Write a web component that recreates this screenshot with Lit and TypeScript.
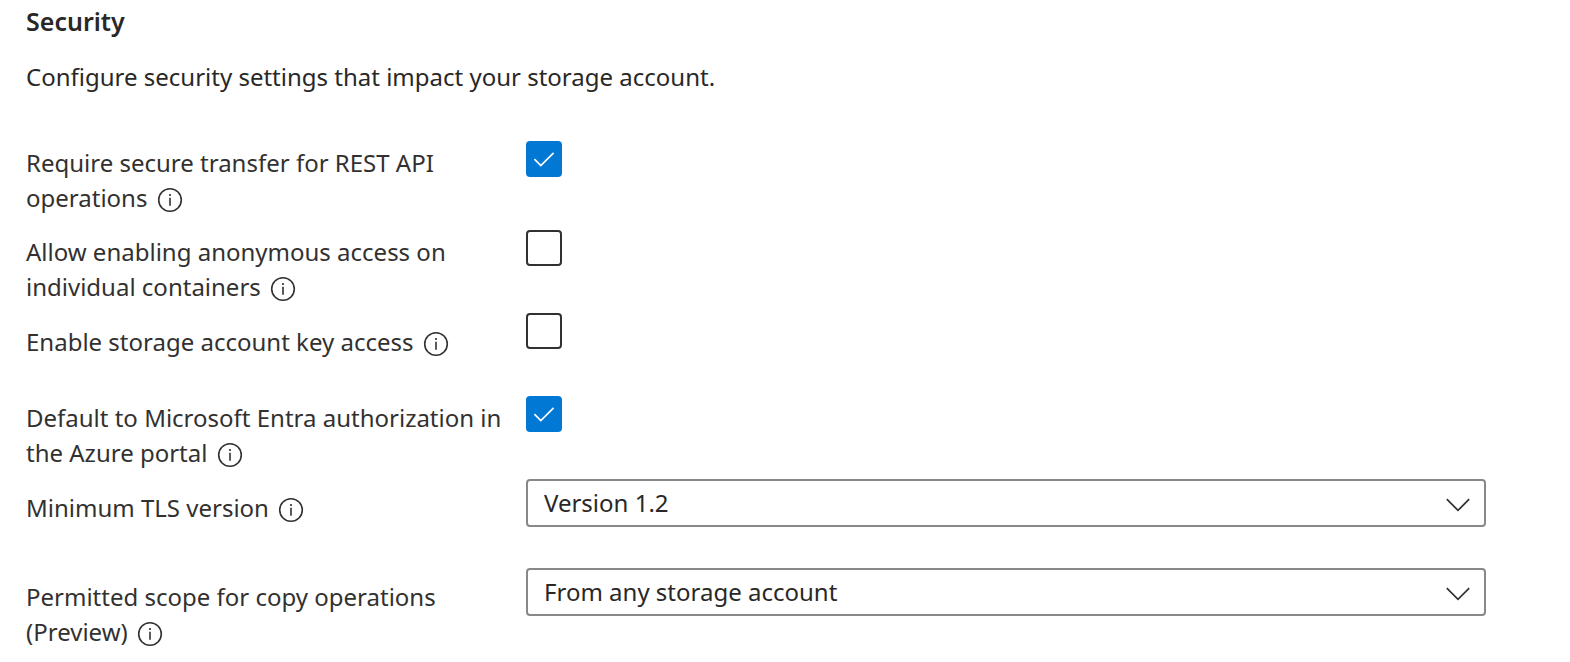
import { LitElement, html, css, nothing } from "lit";
import { customElement, property, state } from "lit/decorators.js";
import { classMap } from "lit/directives/class-map.js";

const base = css`
  :host {
    display: block;
    box-sizing: border-box;
    font-family: "Segoe UI", "Noto Sans", "Open Sans", sans-serif;
    font-size: 24px;
    line-height: 35px;
    color: #323130;
  }
  *,
  *::before,
  *::after {
    box-sizing: border-box;
  }
`;

@customElement("info-button")
class InfoButton extends LitElement {
  @property() about = "";

  static styles = css`
    :host {
      display: inline-block;
      margin-left: 3px;
      vertical-align: -6px;
      line-height: 0;
    }
    .info {
      display: block;
      width: 26px;
      height: 26px;
      padding: 0;
      border: 0;
      border-radius: 50%;
      background: transparent;
      color: #323130;
      cursor: pointer;
    }
    .icon {
      display: block;
    }
  `;

  render() {
    return html`
      <button class="info" type="button" aria-label="More information: ${this.about}">
        <svg class="icon" width="26" height="26" viewBox="0 0 26 26" aria-hidden="true">
          <circle cx="13" cy="13" r="11.3" fill="none" stroke="currentColor" stroke-width="1.6" />
          <circle cx="13" cy="8" r="1.1" fill="currentColor" />
          <path d="M13 10.8V18.8" stroke="currentColor" stroke-width="1.6" />
        </svg>
      </button>
    `;
  }
}

interface Setting {
  id: string;
  label: string;
  kind: "checkbox" | "select";
  checked?: boolean;
  options?: string[];
  single?: boolean;
}

@customElement("setting-row")
class SettingRow extends LitElement {
  @property({ attribute: false }) setting!: Setting;

  static styles = [
    base,
    css`
      .row {
        display: grid;
        grid-template-columns: 500px minmax(0, 1fr);
        align-items: start;
        min-height: 74px;
      }
      .caption {
        padding: 4px 12px 0 0;
      }
      .single {
        padding-top: 11px;
      }
      .check,
      .dropdown {
        display: grid;
        align-items: center;
      }
      .check {
        width: 36px;
        height: 36px;
      }
      .box,
      .mark,
      .select,
      .chevron {
        grid-area: 1 / 1;
      }
      .box {
        appearance: none;
        width: 36px;
        height: 36px;
        margin: 0;
        border: 2px solid #323130;
        border-radius: 4px;
        background: #fff;
      }
      .box:checked {
        border-color: #0078d4;
        background: #0078d4;
      }
      .mark {
        display: none;
        pointer-events: none;
      }
      .box:checked + .mark {
        display: block;
      }
      .select {
        appearance: none;
        width: 100%;
        height: 48px;
        margin: 0;
        padding: 0 56px 1px 16px;
        border: 2px solid #8a8886;
        border-radius: 4px;
        background: #fff;
        color: #292827;
        font: inherit;
      }
      .chevron {
        justify-self: end;
        margin: 4px 16px 0 0;
        pointer-events: none;
      }
    `,
  ];

  private checkbox(s: Setting) {
    return html`
      <span class="check">
        <input class="box" type="checkbox" id=${s.id} ?checked=${s.checked} />
        <svg class="mark" width="36" height="36" viewBox="0 0 36 36" aria-hidden="true">
          <path d="M8.4 18.2L14.8 24.6L27.6 11.8" fill="none" stroke="#fff" stroke-width="1.7" />
        </svg>
      </span>
    `;
  }

  private dropdown(s: Setting) {
    return html`
      <span class="dropdown">
        <select class="select" id=${s.id}>
          ${s.options?.map((o) => html`<option>${o}</option>`) ?? nothing}
        </select>
        <svg class="chevron" width="24" height="14" viewBox="0 0 24 14" aria-hidden="true">
          <path d="M0.8 1.2L12 12.4L23.2 1.2" fill="none" stroke="#323130" stroke-width="1.7" />
        </svg>
      </span>
    `;
  }

  render() {
    const s = this.setting;
    return html`
      <div class="row">
        <div class=${classMap({ caption: true, single: !!s.single })}>
          <label for=${s.id}>${s.label}</label>
          <info-button about=${s.label}></info-button>
        </div>
        ${s.kind === "checkbox" ? this.checkbox(s) : this.dropdown(s)}
      </div>
    `;
  }
}

@customElement("app-root")
class AppRoot extends LitElement {
  @state() private groups: Setting[][] = [
    [
      {
        id: "secure-transfer",
        label: "Require secure transfer for REST API operations",
        kind: "checkbox",
        checked: true,
      },
    ],
    [
      {
        id: "anonymous-access",
        label: "Allow enabling anonymous access on individual containers",
        kind: "checkbox",
      },
      {
        id: "key-access",
        label: "Enable storage account key access",
        kind: "checkbox",
        single: true,
      },
      {
        id: "entra-authorization",
        label: "Default to Microsoft Entra authorization in the Azure portal",
        kind: "checkbox",
        checked: true,
      },
      {
        id: "tls-version",
        label: "Minimum TLS version",
        kind: "select",
        options: ["Version 1.2"],
        single: true,
      },
    ],
    [
      {
        id: "copy-scope",
        label: "Permitted scope for copy operations (Preview)",
        kind: "select",
        options: ["From any storage account"],
        single: true,
      },
    ],
  ];

  static styles = [
    base,
    css`
      :host {
        padding: 4px 84px 0 26px;
        background: #fff;
      }
      .title {
        margin: 0;
        font-size: 25px;
        line-height: 35px;
        font-weight: 600;
        color: #292827;
      }
      .intro {
        margin: 20px 0 47px;
        color: #292827;
      }
      .settings {
        display: grid;
        gap: 15px;
      }
      .group {
        display: grid;
        gap: 9px;
      }
    `,
  ];

  render() {
    return html`
      <section aria-labelledby="title">
        <h2 class="title" id="title">Security</h2>
        <p class="intro">Configure security settings that impact your storage account.</p>
        <div class="settings">
          ${this.groups.map(
            (group) => html`
              <div class="group">
                ${group.map((s) => html`<setting-row .setting=${s}></setting-row>`)}
              </div>
            `,
          )}
        </div>
      </section>
    `;
  }
}
